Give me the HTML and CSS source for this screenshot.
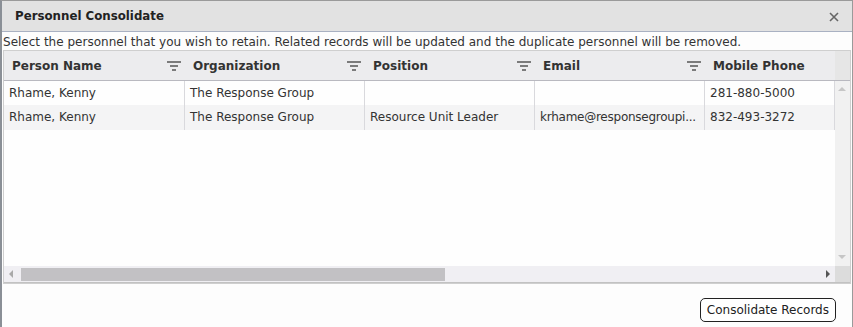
FILE: index.html
```html
<!DOCTYPE html>
<html lang="en">
<head>
    <meta charset="UTF-8">
    <title>Personnel Consolidate</title>
    <link rel="stylesheet" href="styles.css">
</head>
<body>
    <div class="dialog">
        <div class="dialog-title">
            <span>Personnel Consolidate</span>
            <svg class="close" viewBox="0 0 10 10"><path d="M1 1L9 9M9 1L1 9"/></svg>
        </div>
        <div class="dialog-content">
            <p class="hint">Select the personnel that you wish to retain. Related records will be updated and the duplicate personnel will be removed.</p>

            <div class="grid">
                <div class="grid-head">
                    <div class="head-cells">
                        <div class="th c1">Person Name <svg class="filter" viewBox="0 0 14 10"><path d="M0 1h14M3 5h8M5 9h4"/></svg></div>
                        <div class="th c2">Organization <svg class="filter" viewBox="0 0 14 10"><path d="M0 1h14M3 5h8M5 9h4"/></svg></div>
                        <div class="th c3">Position <svg class="filter" viewBox="0 0 14 10"><path d="M0 1h14M3 5h8M5 9h4"/></svg></div>
                        <div class="th c4">Email <svg class="filter" viewBox="0 0 14 10"><path d="M0 1h14M3 5h8M5 9h4"/></svg></div>
                        <div class="th c5">Mobile Phone</div>
                    </div>
                    <div class="head-spacer"></div>
                </div>
                <div class="grid-body">
                    <div class="rows">
                        <div class="row">
                            <div class="td c1">Rhame, Kenny</div>
                            <div class="td c2">The Response Group</div>
                            <div class="td c3"></div>
                            <div class="td c4"></div>
                            <div class="td c5">281-880-5000</div>
                        </div>
                        <div class="row alt">
                            <div class="td c1">Rhame, Kenny</div>
                            <div class="td c2">The Response Group</div>
                            <div class="td c3">Resource Unit Leader</div>
                            <div class="td c4 tight">krhame@responsegroupi...</div>
                            <div class="td c5">832-493-3272</div>
                        </div>
                    </div>
                    <div class="vscroll">
                        <span class="arrow up"></span>
                        <span class="arrow down"></span>
                    </div>
                </div>
                <div class="hscroll-row">
                    <div class="hscroll">
                        <span class="arrow left"></span>
                        <div class="thumb"></div>
                        <span class="arrow right"></span>
                    </div>
                    <div class="corner"></div>
                </div>
            </div>

            <div class="actions">
                <button class="btn">Consolidate Records</button>
            </div>
        </div>
    </div>
</body>
</html>
```

FILE: styles.css
```css
body {
    margin: 0;
    background-color: #ffffff;
    font-family: "DejaVu Sans", Verdana, sans-serif;
    font-size: 12px;
    color: #333;
}

.dialog {
    width: 850px;
    height: 326px;
    border: 1px solid #9a9a9a;
    border-left: 2px solid #8a8f96;
    background-color: #fdfdfd;
    display: flex;
    flex-direction: column;
}

.dialog-title {
    height: 30px;
    display: flex;
    align-items: center;
    justify-content: space-between;
    padding: 0 13px 0 13px;
    background-color: #e2e2e2;
    border-bottom: 1px solid #a9b1c2;
    font-weight: bold;
    font-size: 11.8px;
    color: #222;
}

.close {
    width: 10px;
    height: 10px;
    stroke: #666;
    stroke-width: 1.6;
    fill: none;
    margin-top: 2px;
}

.dialog-content {
    padding: 0 1px 0 1px;
    flex: 1;
    display: flex;
    flex-direction: column;
}

.hint {
    margin: 0;
    padding: 3px 0 0 0;
    height: 15px;
    font-size: 12px;
    letter-spacing: 0.01px;
    color: #333;
    white-space: nowrap;
}

/* grid */
.grid {
    border: 1px solid #cfcfcf;
    height: 232px;
    display: flex;
    flex-direction: column;
    overflow: hidden;
}

.grid-head {
    display: flex;
    height: 29px;
    background-color: #ececee;
    border-bottom: 1px solid #b9b9c0;
}

.head-cells {
    flex: 1;
    display: flex;
    overflow: hidden;
}

.head-spacer {
    width: 15px;
    background-color: #e6e6e6;
}

.c1 { width: 181px; }
.c2 { width: 180px; }
.c3 { width: 170px; }
.c4 { width: 170px; }
.c5 { width: 130px; }

.th, .td {
    flex: none;
    box-sizing: border-box;
    display: flex;
    align-items: center;
    white-space: nowrap;
    overflow: hidden;
}

.th {
    padding: 0 4px 0 8px;
    font-weight: bold;
    color: #333;
    justify-content: space-between;
}

.filter {
    width: 14px;
    height: 10px;
    stroke: #555;
    stroke-width: 1.4;
    fill: none;
}

.grid-body {
    flex: 1;
    display: flex;
}

.rows {
    flex: 1;
    overflow: hidden;
    background-color: #fefefe;
}

.row {
    display: flex;
    height: 24px;
}

.row.alt {
    height: 25px;
    background-color: #f4f4f5;
}

.td {
    padding: 0 5px;
    border-right: 1px solid #d9d9dd;
    display: block;
    line-height: 24px;
}

.td.tight {
    letter-spacing: -0.25px;
}

/* scrollbars */
.vscroll {
    width: 15px;
    background-color: #f1f1f1;
    position: relative;
}

.arrow {
    position: absolute;
    width: 0;
    height: 0;
    border: 4px solid transparent;
}

.arrow.up {
    top: 6px;
    left: 3px;
    border-bottom-color: #c6c6c6;
    border-top-width: 0;
}

.arrow.down {
    bottom: 7px;
    left: 3px;
    border-top-color: #c6c6c6;
    border-bottom-width: 0;
}

.hscroll-row {
    display: flex;
    height: 16px;
    border-bottom: 1px solid #c2c2c2;
}

.hscroll {
    flex: 1;
    position: relative;
    background-color: #f0eff3;
    display: flex;
    align-items: center;
    padding-left: 17px;
}

.thumb {
    width: 424px;
    height: 13px;
    background-color: #c2c1c4;
}

.arrow.left {
    left: 5px;
    top: 4px;
    border-right-color: #a9a9a9;
    border-left-width: 0;
}

.arrow.right {
    right: 5px;
    top: 4px;
    border-left-color: #555;
    border-right-width: 0;
}

.corner {
    width: 15px;
    background-color: #dcdcdc;
}

.actions {
    display: flex;
    justify-content: flex-end;
    padding: 14px 15px 0 0;
}

.btn {
    font-family: "DejaVu Sans", Verdana, sans-serif;
    font-size: 12px;
    color: #222;
    background-color: #fff;
    border: 1px solid #222;
    border-radius: 5px;
    padding: 3px 6px;
    height: 24px;
}
```
